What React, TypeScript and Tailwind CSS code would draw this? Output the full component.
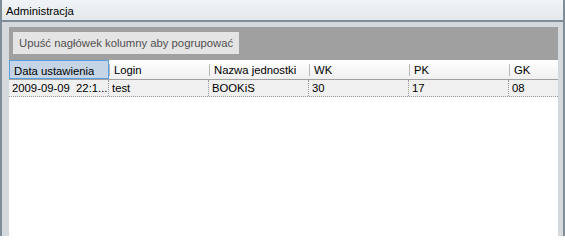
import React from 'react'

const columns = [
  { title: 'Data ustawienia', width: 'w-[100px]' },
  { title: 'Login', width: 'w-[100px]' },
  { title: 'Nazwa jednostki', width: 'w-[100px]' },
  { title: 'WK', width: 'w-[100px]' },
  { title: 'PK', width: 'w-[100px]' },
  { title: 'GK', width: 'flex-1' },
]

const row = ['2009-09-09  22:1...', 'test', 'BOOKiS', '30', '17', '08']

export default function App() {
  return (
    <div
      className="w-[565px] h-[236px] overflow-hidden bg-white text-[11.3px] text-black"
      style={{ fontFamily: '"Liberation Sans", Arial, sans-serif' }}
    >
      <div className="flex h-full flex-col border-x-2 border-[#7f8d99] bg-[#d4d9de]">
        {/* Pasek tytułu */}
        <div className="h-[22px] shrink-0 border-b-2 border-[#7f8d99] bg-gradient-to-b from-[#f1f4f6] to-[#e3e8ec] pl-[4px] pt-[4px] leading-[14px]">
          Administracja
        </div>

        <div className="flex-1 pl-[7px] pr-[5px] pt-[5px]">
          <div className="flex h-full flex-col bg-white">
            {/* Panel grupowania */}
            <div className="h-[33px] shrink-0 bg-[#a0a0a0] pl-[4px] pt-[5px]">
              <div className="inline-block h-[22px] bg-[#e4e4e4] px-[6px] pt-[4px] leading-[14px] text-[#505050]">
                Upuść nagłówek kolumny aby pogrupować
              </div>
            </div>

            {/* Nagłówki */}
            <div className="flex h-[20px] shrink-0 border-b border-[#a0a0a0] bg-gradient-to-b from-white to-[#f0f0f0]">
              {columns.map((c, i) =>
                i === 0 ? (
                  <div
                    key={c.title}
                    className={`${c.width} shrink-0 border border-[#5a9ee0] bg-[#c5d5e6] pl-[4px] pt-[3px] leading-[14px]`}
                  >
                    {c.title}
                  </div>
                ) : (
                  <div key={c.title} className={`${c.width} flex shrink-0 items-center`}>
                    <div className="h-[12px] w-px bg-[#b8b8b8]" />
                    <div className="pl-[4px] leading-[14px]">{c.title}</div>
                  </div>
                ),
              )}
            </div>

            {/* Wiersz danych */}
            <div className="flex h-[17px] shrink-0 border-b border-dotted border-[#9a9a9a] bg-[#f0f0f0]">
              {row.map((v, i) => (
                <div
                  key={i}
                  className={`${columns[i].width} shrink-0 overflow-hidden whitespace-pre pl-[3px] pt-[1px] leading-[14px] ${
                    i < row.length - 1 ? 'border-r border-dotted border-[#9a9a9a]' : ''
                  }`}
                >
                  {v}
                </div>
              ))}
            </div>

            <div className="flex-1 bg-white" />
          </div>
        </div>
      </div>
    </div>
  )
}
